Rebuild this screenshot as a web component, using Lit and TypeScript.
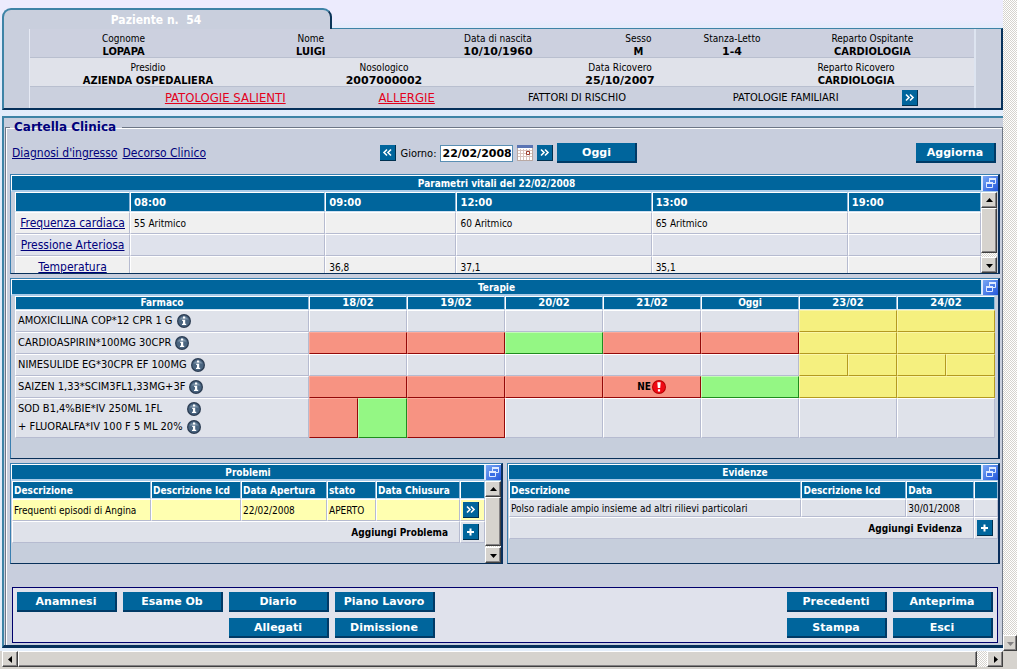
import { LitElement, html, css, svg, nothing } from "lit";
import { customElement, property } from "lit/decorators.js";
import { classMap } from "lit/directives/class-map.js";

const shared = css`
  * { box-sizing: border-box; }
  button { font: inherit; padding: 0; margin: 0; cursor: pointer; }
  .square {
    display: block; flex: none; width: 16px; height: 16px; border: 0; color: #fff;
    background: #00659c; border-right: 1px solid #00304f; border-bottom: 1px solid #00304f;
  }
  .square svg { display: block; width: 15px; height: 15px; }
`;

const glyphs: Record<string, unknown> = {
  next: svg`<path d="M4 4.500l3 3-3 3M8 4.500l3 3-3 3" fill="none" stroke="#fff" stroke-width="1.600"/>`,
  prev: svg`<path d="M7 4.500l-3 3 3 3M11 4.500l-3 3 3 3" fill="none" stroke="#fff" stroke-width="1.600"/>`,
  plus: svg`<path d="M7.500 4.500v7M4 8h7" fill="none" stroke="#fff" stroke-width="2"/>`,
};

const square = (kind: string, label: string) => html`
  <button class="square" aria-label=${label}><svg viewBox="0 0 15 15">${glyphs[kind]}</svg></button>`;

const infoIcon = html`<svg class="info" viewBox="0 0 14 14" role="img" aria-label="Informazioni">
  <circle cx="7" cy="7" r="7" fill="#2b3c52"/><circle cx="7" cy="7" r="5.700" fill="#4a6580"/>
  <path d="M2.500 5.500a5 5 0 0 1 9 0z" fill="#7d93a8"/>
  <path d="M6 2.500h2.200v2H6zM5.200 5.700h3v4h1v1.300H5v-1.300h1V7h-.8z" fill="#fff"/></svg>`;

const alertIcon = html`<svg class="info" viewBox="0 0 14 14" role="img" aria-label="Attenzione">
  <circle cx="7" cy="7" r="7" fill="#b40000"/><circle cx="7" cy="7" r="6" fill="#f00a14"/>
  <path d="M5.300 2.200h3.400L8.200 8H5.800zM5.900 9.200h2.200v2.200H5.900z" fill="#fff"/></svg>`;

const columns = (widths: number[]) => {
  const total = widths.reduce((a, b) => a + b, 0);
  return html`<colgroup>${widths.map((w) => html`<col style="width:${(w / total) * 100}%">`)}</colgroup>`;
};

@customElement("scroll-bar")
class ScrollBar extends LitElement {
  @property({ type: Boolean, reflect: true }) horizontal = false;
  @property({ type: Boolean, reflect: true }) disabled = false;
  @property({ type: Number }) size = 100;
  static styles = css`
    :host { display: flex; flex-direction: column; width: 16px; background: repeating-conic-gradient(#d6d3ce 0 25%, #fff 0 50%) 0 0 / 2px 2px; }
    :host([horizontal]) { flex-direction: row; width: auto; height: 16px; }
    .arrow, .thumb {
      background: #d6d3ce; border: 1px solid #fff; border-right-color: #404040; border-bottom-color: #404040;
      box-shadow: inset -1px -1px 0 #848284; box-sizing: border-box;
    }
    .arrow { flex: none; width: 100%; height: 16px; padding: 0; display: grid; place-items: center; }
    :host([horizontal]) .arrow { width: 16px; height: 100%; }
    .arrow svg { display: block; width: 7px; height: 7px; }
    .track { flex: 1; min-height: 0; min-width: 0; }
    .thumb { width: 100%; height: 100%; }
  `;
  render() {
    const h = this.horizontal;
    const fill = this.disabled ? "#848284" : "#000";
    const span = `${h ? "width" : "height"}:${this.size}%`;
    return html`
      ${this.disabled ? nothing : html`<button class="arrow" aria-label=${h ? "Scorri a sinistra" : "Scorri in alto"}>
        <svg viewBox="0 0 7 7"><path fill=${fill} d=${h ? "M5 0v7L1 3.500z" : "M0 5h7L3.500 1z"}/></svg>
      </button>`}
      <div class="track">${this.disabled ? nothing : html`<div class="thumb" style=${span}></div>`}</div>
      <button class="arrow" aria-label=${h ? "Scorri a destra" : "Scorri in basso"}>
        <svg viewBox="0 0 7 7"><path fill=${fill} d=${h ? "M2 0v7l4-3.500z" : "M0 2h7L3.500 6z"}/></svg>
      </button>`;
  }
}

@customElement("data-panel")
class DataPanel extends LitElement {
  @property() heading = "";
  static styles = [shared, css`
    :host {
      display: flex; flex-direction: column; min-width: 0; background: #c6cedc;
      border: 1px solid #3a7fb0; border-right: 2px solid #0a2f5c; border-bottom: 1px solid #08305a;
    }
    .head { display: flex; height: 17px; border: 1px solid #fff; border-right: 0; border-bottom: 2px solid #a9cbe8; }
    .title { flex: 1; margin: 0; text-align: center; background: #00659c; color: #fff; font-size: 10px; font-weight: bold; line-height: 16px; }
    .expand { flex: none; width: 17px; height: 15px; border: 0; border-left: 2px solid #dce8fa; background: linear-gradient(135deg, #78a6f4, #2458dc); }
    .expand svg { display: block; width: 15px; height: 15px; }
    .body { display: flex; flex: 1; min-height: 0; }
  `];
  render() {
    return html`
      <div class="head">
        <h2 class="title">${this.heading}</h2>
        <button class="expand" aria-label="Ingrandisci ${this.heading}">
          <svg viewBox="0 0 15 15" fill="none" stroke="#dfeaff">
            <path d="M6.500 6V2.500h6v5H10" /><path d="M6 3h7" stroke-width="2"/>
            <path d="M3.500 6.500h6v5h-6z" fill="#3a6ee6"/><path d="M3 7h7" stroke-width="2"/>
          </svg>
        </button>
      </div>
      <div class="body"><slot></slot></div>`;
  }
}

type Cell = { kind?: string; span?: number; flag?: string };
const none = (n: number): Cell[] => Array.from({ length: n }, () => ({}));
const of = (kind: string, span = 2): Cell => ({ kind, span });

const therapies: { drugs: string[]; cells: Cell[] }[] = [
  { drugs: ["AMOXICILLINA COP*12 CPR 1 G"], cells: [...none(5), of("yellow"), of("yellow")] },
  { drugs: ["CARDIOASPIRIN*100MG 30CPR"], cells: [of("red"), of("red"), of("green"), of("red"), of("red"), of("yellow"), of("yellow")] },
  { drugs: ["NIMESULIDE EG*30CPR EF 100MG"], cells: [...none(5), of("yellow", 1), of("yellow", 1), of("yellow", 1), of("yellow", 1)] },
  { drugs: ["SAIZEN 1,33*SCIM3FL1,33MG+3F"], cells: [of("red"), of("red"), of("red"), { kind: "red", flag: "NE" }, of("green"), of("yellow"), of("yellow")] },
  { drugs: ["SOD B1,4%BIE*IV 250ML 1FL", "+ FLUORALFA*IV 100 F 5 ML 20%"], cells: [of("red", 1), of("green", 1), of("red"), ...none(5)] },
];

const vitals: { name: string; values: string[] }[] = [
  { name: "Frequenza cardiaca", values: ["55 Aritmico", "", "60 Aritmico", "65 Aritmico", ""] },
  { name: "Pressione Arteriosa", values: ["", "", "", "", ""] },
  { name: "Temperatura", values: ["", "36,8", "37,1", "35,1", ""] },
];

const patientRows: [string, string][][] = [
  [["Cognome", "LOPAPA"], ["Nome", "LUIGI"], ["Data di nascita", "10/10/1960"], ["Sesso", "M"], ["Stanza-Letto", "1-4"], ["Reparto Ospitante", "CARDIOLOGIA"]],
  [["Presidio", "AZIENDA OSPEDALIERA"], ["Nosologico", "2007000002"], ["Data Ricovero", "25/10/2007"], ["Reparto Ricovero", "CARDIOLOGIA"]],
];

@customElement("app-root")
class AppRoot extends LitElement {
  static styles = [shared, css`
    :host {
      display: grid; grid-template-columns: minmax(0, 1fr) 14px; grid-template-rows: minmax(0, 1fr) auto;
      min-height: 100vh; background: #d6d3ce; color: #000;
      font-family: "DejaVu Sans Condensed", "DejaVu Sans", sans-serif; font-stretch: condensed; font-size: 11px;
    }
    .page { display: flex; flex-direction: column; padding: 8px 0 3px 2px; background: linear-gradient(#ecebfd, #ecebfd 20px, #e2ecfb 28px, #e4eefa); }
    .wide { font-family: "DejaVu Sans", sans-serif; font-stretch: normal; }
    a { color: #00007b; }

    .tab {
      position: relative; width: 330px; height: 21px; background: #c9cfdd; border: 2px solid #3d83a6; border-right-color: #0a3558;
      border-bottom: 0; border-radius: 9px 9px 0 0; margin: 0 0 -1px; padding-right: 22px;
      text-align: center; font-size: 12px; line-height: 20px; color: #fff; white-space: pre;
    }
    .patient {
      background: #c9cfdd; border: 2px solid #3d83a6; border-top-width: 1px;
      border-right-color: #06305a; border-bottom: 2px solid #06305a; padding: 0 25px;
    }
    .grid { border-left: 1px solid #e6eaf4; border-right: 2px solid #dde4f0; }
    .line { display: grid; height: 29px; padding-top: 4px; text-align: center; border-bottom: 1px solid #b9bfcf; background: #ccd0df; }
    .line.six { grid-template-columns: 2fr 2fr 2fr 1fr 1fr 2fr; padding-right: 8px; }
    .line.four { grid-template-columns: repeat(4, 1fr); background: #e0e2ea; }
    .field { margin: 0; font-size: 10px; line-height: 12px; }
    .field dt { margin: 0; }
    .field dd { margin: 0; font-weight: bold; font-size: 11px; line-height: 14px; }
    .history {
      display: grid; grid-template-columns: 60fr 271fr 92fr 249fr 169fr 79fr 25fr; height: 21px;
      align-items: center; justify-items: center; background: #cbd0de; white-space: nowrap;
    }
    .history > * { grid-row: 1; }
    .history a { color: #e3001b; font-size: 13px; }
    .c1 { grid-column: 1; } .c2 { grid-column: 2; } .c3 { grid-column: 3; } .c4 { grid-column: 4; }
    .c5 { grid-column: 5; } .c6 { grid-column: 6; } .c7 { grid-column: 7; }
    .r1 { grid-row: 1; } .r2 { grid-row: 2; }

    .main {
      flex: 1; display: flex; flex-direction: column; margin-top: 6px; padding: 0 0 0 1px; background: #c8cedd;
      border: 2px solid #3d83a6; border-right: 0; border-bottom: 3px solid #06305a;
    }
    .record {
      flex: 1; min-width: 0; margin: 0; padding: 6px 2px 1px 4px; border: 1px solid #6d7686;
      border-bottom: 0; box-shadow: inset 1px 1px 0 #fff;
    }
    .legend { padding: 0 6px 0 4px; margin: 0; font-size: 12px; font-weight: bold; line-height: 18px; color: #00007b; }

    .toolbar {
      display: grid; grid-template-columns: 370fr auto 360fr; align-items: center; height: 20px;
      margin: 1px 0 11px; padding: 0 4px 0 2px;
    }
    .links { display: flex; gap: 5px; font-size: 12px; }
    .day { display: flex; align-items: center; gap: 4px; }
    .date { width: 73px; height: 17px; padding: 0 1px; border: 1px solid #5a8fb4; background: #fff; font-size: 11px; font-weight: bold; color: #000; }
    .calendar { width: 16px; height: 16px; border: 0; background: none; }
    .calendar svg { display: block; }
    .action {
      width: 100px; height: 20px; border: 0; border-right: 2px solid #003a66; border-bottom: 2px solid #003a66;
      background: #00659c; color: #fff; font-size: 11px; font-weight: bold; line-height: 16px; padding-top: 2px;
    }
    .toolbar .action { width: 80px; }
    .toolbar > .action { justify-self: end; }

    table { border-collapse: separate; border-spacing: 0; table-layout: fixed; width: 100%; }
    th, td {
      height: 22px; padding: 0 3px; font-size: 10px; text-align: left; white-space: nowrap; overflow: hidden;
      border: 1px solid #fff; border-right-color: #b6bbd0; border-bottom-color: #b6bbd0; background: #dfe2ea;
    }
    thead th { background: #00659c; color: #fff; font-weight: bold; border-right-color: #8fb6d6; border-bottom-color: #cfe0f0; }

    .vitals { height: 100px; margin-bottom: 4px; }
    .clip { flex: 1; min-width: 0; overflow: hidden; }
    .vitals .clip { padding-left: 4px; }
    .vitals scroll-bar { margin-right: 1px; }
    .vitals thead th { height: 20px; }
    .vitals tbody tr:nth-child(odd) > * { background: #f0f0f0; }
    .vitals tbody tr:nth-child(even) > * { background: #dfe2ec; }
    .vitals tbody th { text-align: center; font-size: 12px; font-weight: normal; padding: 0; }

    .therapies { height: 181px; margin-bottom: 4px; }
    .therapies .clip { padding: 0 3px 0 4px; }
    .therapies thead th { height: 14px; text-align: center; line-height: 12px; }
    .therapies tbody th { padding: 1px 2px; font-size: 11px; font-weight: normal; }
    .therapies td { text-align: center; }
    .drugs { display: inline-grid; grid-template-columns: auto auto; column-gap: 4px; align-items: center; line-height: 18px; vertical-align: top; }
    .info { display: block; width: 14px; height: 14px; }
    td.red { background: #f79382; border-color: #fba99a #940808 #940808 #fba99a; }
    td.green { background: #94f784; border-color: #c4fbb8 #1f8c1f #1f8c1f #c4fbb8; }
    td.yellow { background: #f5f07f; border-color: #faf6a8 #b49a20 #b49a20 #faf6a8; }
    .flag { display: flex; align-items: center; justify-content: center; gap: 1px; padding-right: 1px; font-weight: bold; line-height: 14px; }

    .pair { display: grid; grid-template-columns: 1fr 1fr; gap: 4px; height: 101px; margin-bottom: 23px; }
    .listing .clip { padding-left: 1px; }
    .listing thead th { height: 18px; padding: 0 1px; }
    .listing td { padding: 0 1px; }
    .listing .flush { padding: 0 2px; }
    .compact .first td { height: 18px; }
    .listing .open td { background: #ffffb0; }
    .listing .add { text-align: right; font-weight: bold; padding-right: 11px; }

    .footer {
      display: grid; grid-template-columns: repeat(4, 100px) 1fr repeat(2, 100px); gap: 6px;
      margin: 0 2px; padding: 4px; border: 1px solid #00006b; background: #e0e2ec;
    }

    .bottom { display: flex; background: #d6d3ce; padding: 0 0 2px 2px; }
    .bottom scroll-bar { flex: 1; }
    .side { width: 14px; }
  `];

  private action(label: string, col: number, row: number) {
    return html`<button class="action wide c${col} r${row}">${label}</button>`;
  }

  render() {
    return html`
      <div class="page">
        <h1 class="tab">Paziente n.  54</h1>
        <section class="patient">
          <div class="grid">
            ${patientRows.map((row) => html`<div class=${classMap({ line: true, six: row.length === 6, four: row.length === 4 })}>
              ${row.map(([k, v]) => html`<dl class="field"><dt>${k}</dt><dd class=${classMap({ wide: /^\d/.test(v) })}>${v}</dd></dl>`)}
            </div>`)}
            <div class="history">
              <a class="c2" href="#salienti">PATOLOGIE SALIENTI</a>
              <a class="c3" href="#allergie">ALLERGIE</a>
              <span class="c4">FATTORI DI RISCHIO</span>
              <span class="c5">PATOLOGIE FAMILIARI</span>
              <div class="c6">${square("next", "Altri dati paziente")}</div>
            </div>
          </div>
        </section>

        <main class="main">
          <fieldset class="record">
            <legend class="legend wide">Cartella Clinica</legend>
            <div class="toolbar">
              <nav class="links"><a href="#diagnosi">Diagnosi d'ingresso</a><a href="#decorso">Decorso Clinico</a></nav>
              <div class="day">
                ${square("prev", "Giorno precedente")}
                <label for="day">Giorno:</label>
                <input id="day" class="date wide" type="text" value="22/02/2008">
                <button class="calendar" aria-label="Apri calendario">
                  <svg width="16" height="16" viewBox="0 0 16 16"><path d="M0 0h16v16H0z" fill="#fff"/>
                    <path d="M1 5.500h14M1 8.500h14M1 11.500h14M3.500 4v11M6.500 4v11M9.500 4v11M12.500 4v11" stroke="#d9c3bd"/>
                    <path d="M.5 15.500v-15M15.500 1v15M0 15.500h16" stroke="#b9a9a4"/><path d="M0 0h16v3H0z" fill="#5a74b4"/>
                    <path d="M9.500 6.500h3v3h-3z" fill="#fff" stroke="#a04030"/></svg>
                </button>
                ${square("next", "Giorno successivo")}
                <button class="action wide">Oggi</button>
              </div>
              <button class="action wide">Aggiorna</button>
            </div>

            <data-panel class="vitals" heading="Parametri vitali del 22/02/2008">
              <div class="clip">
                <table>
                  ${columns([115, 195, 131, 195, 196, 133])}
                  <thead><tr><th></th>${["08:00", "09:00", "12:00", "13:00", "19:00"].map((t) => html`<th class="wide">${t}</th>`)}</tr></thead>
                  <tbody>${vitals.map((v) => html`<tr>
                    <th><a href="#parametro">${v.name}</a></th>${v.values.map((x) => html`<td>${x}</td>`)}
                  </tr>`)}</tbody>
                </table>
              </div>
              <scroll-bar size="92"></scroll-bar>
            </data-panel>

            <data-panel class="therapies" heading="Terapie">
              <div class="clip">
                <table>
                  ${columns([294, ...Array(14).fill(49)])}
                  <thead><tr><th>Farmaco</th>
                    ${["18/02", "19/02", "20/02", "21/02", "Oggi", "23/02", "24/02"].map((t) => html`<th class=${classMap({ wide: t !== "Oggi" })} colspan="2">${t}</th>`)}</tr></thead>
                  <tbody>${therapies.map((t) => html`<tr>
                    <th><div class="drugs">${t.drugs.map((d) => html`<span>${d}</span>${infoIcon}`)}</div></th>
                    ${t.cells.map((c) => html`<td class=${c.kind ?? "empty"} colspan=${c.span ?? 2}>
                      ${c.flag ? html`<div class="flag">${c.flag}${alertIcon}</div>` : nothing}</td>`)}
                  </tr>`)}</tbody>
                </table>
              </div>
            </data-panel>

            <div class="pair">
              <data-panel class="listing" heading="Problemi">
                <div class="clip">
                  <table>
                    ${columns([139, 90, 86, 49, 84, 25])}
                    <thead><tr>${["Descrizione", "Descrizione Icd", "Data Apertura", "stato", "Data Chiusura", ""].map((t) => html`<th>${t}</th>`)}</tr></thead>
                    <tbody>
                      <tr class="open"><td>Frequenti episodi di Angina</td><td></td><td>22/02/2008</td><td>APERTO</td><td></td>
                        <td class="flush">${square("next", "Apri problema")}</td></tr>
                      <tr><td class="add" colspan="5">Aggiungi Problema</td><td class="flush">${square("plus", "Aggiungi problema")}</td></tr>
                    </tbody>
                  </table>
                </div>
                <scroll-bar size="98"></scroll-bar>
              </data-panel>
              <data-panel class="listing compact" heading="Evidenze">
                <div class="clip">
                  <table>
                    ${columns([293, 105, 68, 24])}
                    <thead><tr>${["Descrizione", "Descrizione Icd", "Data", ""].map((t) => html`<th>${t}</th>`)}</tr></thead>
                    <tbody>
                      <tr class="first"><td>Polso radiale ampio insieme ad altri rilievi particolari</td><td></td><td>30/01/2008</td><td></td></tr>
                      <tr><td class="add" colspan="3">Aggiungi Evidenza</td><td class="flush">${square("plus", "Aggiungi evidenza")}</td></tr>
                    </tbody>
                  </table>
                </div>
              </data-panel>
            </div>

            <div class="footer">
              ${this.action("Anamnesi", 1, 1)}${this.action("Esame Ob", 2, 1)}${this.action("Diario", 3, 1)}${this.action("Piano Lavoro", 4, 1)}
              ${this.action("Precedenti", 6, 1)}${this.action("Anteprima", 7, 1)}
              ${this.action("Allegati", 3, 2)}${this.action("Dimissione", 4, 2)}${this.action("Stampa", 6, 2)}${this.action("Esci", 7, 2)}
            </div>
          </fieldset>
        </main>
      </div>
      <scroll-bar class="side" disabled></scroll-bar>
      <div class="bottom"><scroll-bar horizontal size="99"></scroll-bar></div>`;
  }
}
